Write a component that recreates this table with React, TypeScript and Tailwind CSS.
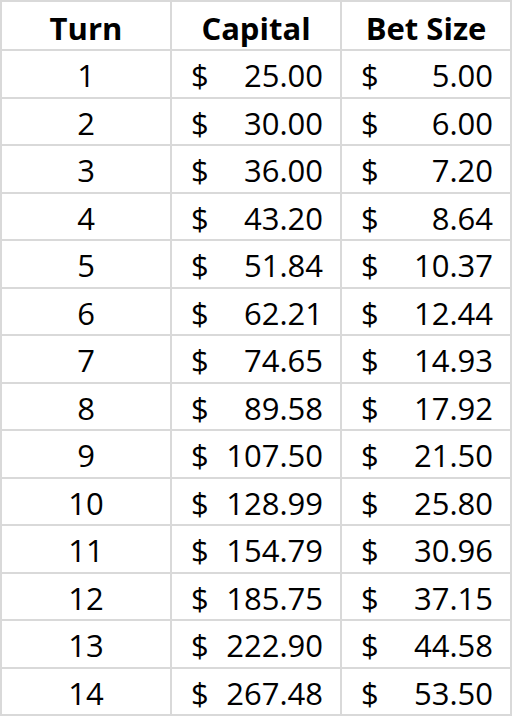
const rows: [number, string, string][] = [
  [1, "25.00", "5.00"],
  [2, "30.00", "6.00"],
  [3, "36.00", "7.20"],
  [4, "43.20", "8.64"],
  [5, "51.84", "10.37"],
  [6, "62.21", "12.44"],
  [7, "74.65", "14.93"],
  [8, "89.58", "17.92"],
  [9, "107.50", "21.50"],
  [10, "128.99", "25.80"],
  [11, "154.79", "30.96"],
  [12, "185.75", "37.15"],
  [13, "222.90", "44.58"],
  [14, "267.48", "53.50"],
];

const cell = "w-[170px] border-l-2 border-[#d9d9d9] flex items-center";

function Money({ value }: { value: string }) {
  return (
    <div className={`${cell} justify-between pl-[19px] pr-[17px] pt-[4px]`}>
      <span>$</span>
      <span>{value}</span>
    </div>
  );
}

export default function App() {
  return (
    <div className="w-[515px] h-[720px] bg-white overflow-hidden text-black font-['Open_Sans',sans-serif] text-[31px] leading-[31px]">
      <div className="flex w-fit border-t-2 border-b-2 border-r-2 border-[#d9d9d9] h-[51px] font-bold">
        <div className={`${cell} justify-center pt-[5px]`}>Turn</div>
        <div className={`${cell} justify-center pt-[5px]`}>Capital</div>
        <div className={`${cell} justify-center pt-[5px]`}>Bet Size</div>
      </div>
      {rows.map(([turn, capital, bet]) => (
        <div key={turn} className="flex w-fit border-b-2 border-r-2 border-[#d9d9d9] h-[47.5px]">
          <div className={`${cell} justify-center pt-[4px]`}>{turn}</div>
          <Money value={capital} />
          <Money value={bet} />
        </div>
      ))}
    </div>
  );
}
